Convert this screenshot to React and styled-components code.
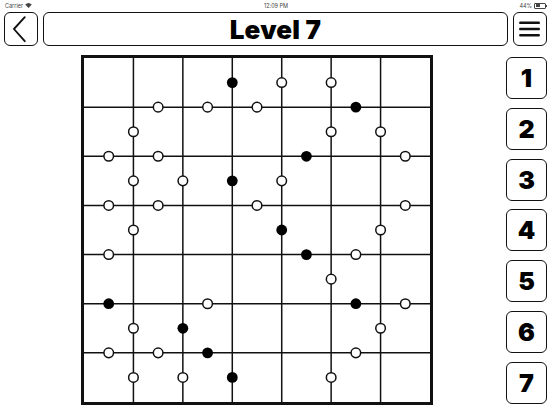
import React from "react"
import styled, { createGlobalStyle } from "styled-components"

const GlobalStyle = createGlobalStyle`
  html, body {
    margin: 0;
    padding: 0;
    background: #ffffff;
  }
  body {
    font-family: Inter, "DejaVu Sans", sans-serif;
    color: #000;
  }
`

const Screen = styled.div`
  width: 552px;
  height: 414px;
  overflow: hidden;
  background: #fff;
`

const StatusBar = styled.div`
  height: 11px;
  display: flex;
  align-items: center;
  justify-content: space-between;
  padding: 0 6px 0 5px;
  font-size: 5.5px;
  color: #444;
  position: relative;

  .clock {
    position: absolute;
    left: 0;
    right: 0;
    text-align: center;
  }
  .side {
    display: flex;
    align-items: center;
    gap: 2px;
  }
`

const Battery = styled.span`
  display: inline-block;
  width: 10px;
  height: 4px;
  border: 0.8px solid #444;
  border-radius: 1px;
  position: relative;

  &::before {
    content: "";
    position: absolute;
    left: 0.5px;
    top: 0.5px;
    bottom: 0.5px;
    width: 4px;
    background: #444;
  }
  &::after {
    content: "";
    position: absolute;
    right: -2px;
    top: 1px;
    width: 1px;
    height: 2px;
    background: #444;
  }
`

const Header = styled.div`
  display: flex;
  gap: 5px;
  height: 34px;
  margin-top: 1px;
  padding: 0 5px 0 4px;
`

const Frame = styled.div`
  box-sizing: border-box;
  border: 1.6px solid #111;
  border-radius: 6px;
  display: flex;
  align-items: center;
  justify-content: center;
  background: #fff;
`

const IconButton = styled(Frame)`
  width: 34px;
  flex: 0 0 34px;
`

const TitleBox = styled(Frame)`
  flex: 1;
  font-size: 26px;
  font-weight: 900;
  letter-spacing: 0.2px;
`

const Main = styled.div`
  display: flex;
  padding-top: 9px;
  padding-right: 5px;
`

const Board = styled.div`
  margin-left: 81px;
  border: 3px solid #111;
  width: 346px;
  height: 344px;
  line-height: 0;
`

const NumberColumn = styled.div`
  margin-left: auto;
  margin-top: 2px;
  display: flex;
  flex-direction: column;
  gap: 8.8px;
`

const NumberButton = styled(Frame)`
  width: 41px;
  height: 42px;
  font-size: 25px;
  font-weight: 900;
`

const W = 346
const H = 344
const cw = W / 7
const ch = H / 7

// dots on edge midpoints: v = on vertical line k, row r ; h = on horizontal line k, col c
const dots = [
  ["v", 3, 0, 1], ["v", 4, 0, 0], ["v", 5, 0, 0],
  ["h", 1, 1, 0], ["h", 1, 2, 0], ["h", 1, 3, 0], ["h", 1, 5, 1],
  ["v", 1, 1, 0], ["v", 5, 1, 0], ["v", 6, 1, 0],
  ["h", 2, 0, 0], ["h", 2, 1, 0], ["h", 2, 4, 1], ["h", 2, 6, 0],
  ["v", 1, 2, 0], ["v", 2, 2, 0], ["v", 3, 2, 1], ["v", 4, 2, 0],
  ["h", 3, 0, 0], ["h", 3, 1, 0], ["h", 3, 3, 0], ["h", 3, 6, 0],
  ["v", 1, 3, 0], ["v", 4, 3, 1], ["v", 6, 3, 0],
  ["h", 4, 0, 0], ["h", 4, 4, 1], ["h", 4, 5, 0],
  ["v", 5, 4, 0],
  ["h", 5, 0, 1], ["h", 5, 2, 0], ["h", 5, 5, 1], ["h", 5, 6, 0],
  ["v", 1, 5, 0], ["v", 2, 5, 1], ["v", 6, 5, 0],
  ["h", 6, 0, 0], ["h", 6, 1, 0], ["h", 6, 2, 1], ["h", 6, 5, 0],
  ["v", 1, 6, 0], ["v", 2, 6, 0], ["v", 3, 6, 1], ["v", 5, 6, 0],
]

const Grid = () => {
  const lines = [1, 2, 3, 4, 5, 6]
  return (
    <svg width={W} height={H} viewBox={`0 0 ${W} ${H}`}>
      {lines.map(k => (
        <line key={"v" + k} x1={k * cw} y1={0} x2={k * cw} y2={H} stroke="#111" strokeWidth="1.5" />
      ))}
      {lines.map(k => (
        <line key={"h" + k} x1={0} y1={k * ch} x2={W} y2={k * ch} stroke="#111" strokeWidth="1.5" />
      ))}
      {dots.map(([t, k, m, filled], i) => {
        const x = t === "v" ? k * cw : (m + 0.5) * cw
        const y = t === "v" ? (m + 0.5) * ch : k * ch
        return filled ? (
          <circle key={i} cx={x} cy={y} r="5.4" fill="#000" />
        ) : (
          <circle key={i} cx={x} cy={y} r="4.8" fill="#fff" stroke="#111" strokeWidth="1.5" />
        )
      })}
    </svg>
  )
}

const Wifi = () => (
  <svg width="7" height="5" viewBox="0 0 14 10">
    <path d="M7 10 L0.5 3.2 A9.5 9.5 0 0 1 13.5 3.2 Z" fill="#444" />
  </svg>
)

export default function App() {
  return (
    <Screen>
      <GlobalStyle />
      <StatusBar>
        <span className="side">
          Carrier <Wifi />
        </span>
        <span className="clock">12:09 PM</span>
        <span className="side">
          44% <Battery />
        </span>
      </StatusBar>
      <Header>
        <IconButton>
          <svg width="34" height="34" viewBox="0 0 34 34">
            <polyline points="21,4.5 9.5,17 21,30" fill="none" stroke="#111" strokeWidth="2" strokeLinecap="round" strokeLinejoin="round" />
          </svg>
        </IconButton>
        <TitleBox>Level 7</TitleBox>
        <IconButton>
          <svg width="34" height="34" viewBox="0 0 34 34">
            <rect x="5.5" y="9" width="22" height="2.8" rx="1" fill="#111" />
            <rect x="5.5" y="15.6" width="22" height="2.8" rx="1" fill="#111" />
            <rect x="5.5" y="22.2" width="22" height="2.8" rx="1" fill="#111" />
          </svg>
        </IconButton>
      </Header>
      <Main>
        <Board>
          <Grid />
        </Board>
        <NumberColumn>
          {[1, 2, 3, 4, 5, 6, 7].map(n => (
            <NumberButton key={n}>{n}</NumberButton>
          ))}
        </NumberColumn>
      </Main>
    </Screen>
  )
}
